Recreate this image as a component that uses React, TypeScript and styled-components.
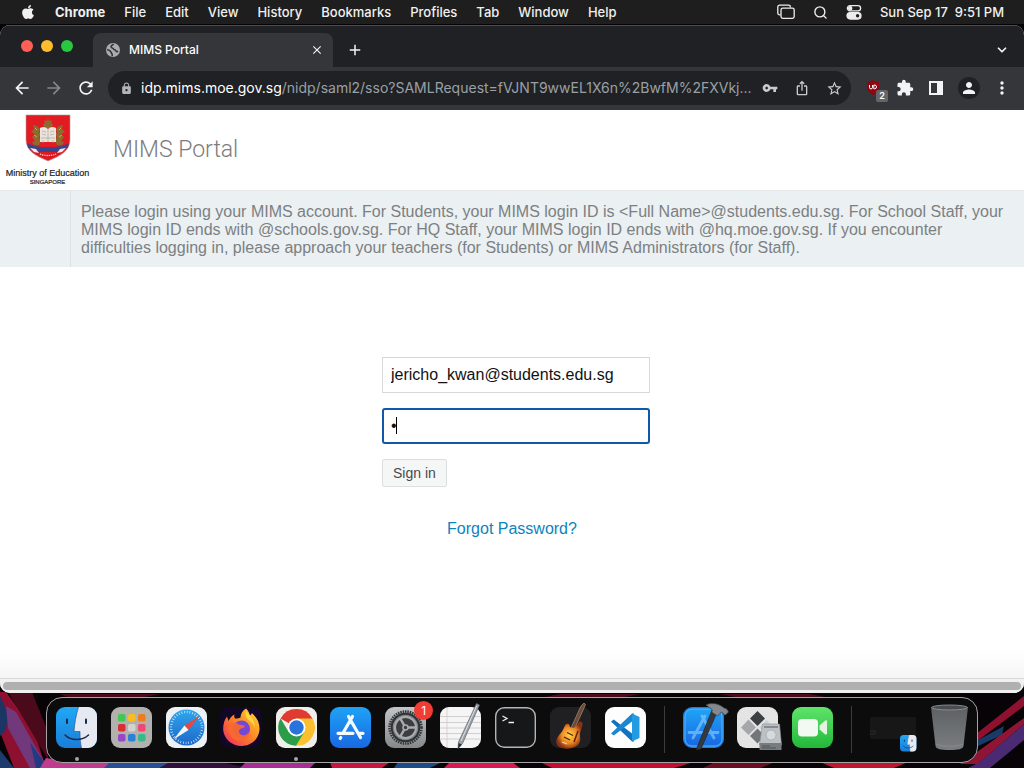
import React from "react";
import styled, { createGlobalStyle } from "styled-components";
import { FaApple } from "react-icons/fa";
import {
  MdArrowBack,
  MdArrowForward,
  MdRefresh,
  MdLock,
  MdVpnKey,
  MdIosShare,
  MdStarBorder,
  MdExtension,
  MdPerson,
  MdMoreVert,
  MdPublic,
  MdClose,
  MdAdd,
} from "react-icons/md";
import { ChevronDown, Search } from "lucide-react";

const GlobalStyle = createGlobalStyle`
  *, *::before, *::after { box-sizing: border-box; }
  html, body { margin: 0; padding: 0; background: #000; }
  body { font-family: Inter, "Liberation Sans", sans-serif; }
  button, input { font: inherit; }
  svg { display: block; flex: none; }
`;

const Desktop = styled.div`
  position: relative;
  display: flex;
  flex-direction: column;
  min-height: 100vh;
  background: #050305;
  overflow: hidden;
`;

const Wallpaper = styled.svg`
  position: absolute;
  left: 0;
  bottom: 0;
  width: 100%;
  height: 96px;
`;

/* ---------- system menu bar ---------- */

const MenuBar = styled.header`
  position: relative;
  display: flex;
  align-items: center;
  justify-content: space-between;
  height: 24px;
  padding: 0 20px;
  background: #1e1e1e;
  color: #f0f0f0;
  font-size: 13px;
  font-weight: 500;
  line-height: 16px;
`;

const MenuList = styled.nav`
  display: flex;
  align-items: center;
  gap: 19px;
`;

const MenuItem = styled.button<{ $bold?: boolean }>`
  padding: 0;
  border: 0;
  background: none;
  color: inherit;
  font-weight: ${(p) => (p.$bold ? 700 : 500)};
  white-space: nowrap;
`;

const StatusList = styled.div`
  display: flex;
  align-items: center;
  gap: 18px;
`;

const Clock = styled.time`
  white-space: pre;
`;

/* ---------- browser window ---------- */

const BrowserWindow = styled.main`
  position: relative;
  display: flex;
  flex-direction: column;
  flex: 1;
  margin-top: 1px;
  border-radius: 10px;
  background: #fff;
  overflow: hidden;
`;

const TabStrip = styled.div`
  display: flex;
  align-items: flex-end;
  height: 42px;
  background: #202124;
  border-top: 1px solid #4b4c4e;
  color: #fff;
`;

const Lights = styled.div`
  display: flex;
  gap: 8px;
  align-self: center;
  width: 93px;
  padding: 0 0 2px 21px;
`;

const Light = styled.button<{ $color: string }>`
  width: 12px;
  height: 12px;
  padding: 0;
  border: 0;
  border-radius: 50%;
  background: ${(p) => p.$color};
`;

const Tab = styled.div`
  display: flex;
  align-items: center;
  gap: 8px;
  width: 240px;
  height: 34px;
  padding: 0 9px 0 12px;
  border-radius: 8px 8px 0 0;
  background: #35363a;
`;

const TabTitle = styled.span`
  flex: 1;
  font-size: 12px;
  font-weight: 500;
  line-height: 16px;
`;

const IconButton = styled.button<{ $color?: string }>`
  display: flex;
  align-items: center;
  justify-content: center;
  padding: 0;
  border: 0;
  background: none;
  color: ${(p) => p.$color || "#f1f3f4"};
`;

const StripActions = styled.div`
  display: flex;
  flex: 1;
  align-items: center;
  justify-content: space-between;
  height: 34px;
  padding: 0 15px 0 13px;
`;

const Toolbar = styled.div`
  display: flex;
  align-items: center;
  height: 43px;
  padding: 0 12px 1px;
  background: #35363a;
`;

const NavButtons = styled.div`
  display: flex;
  gap: 12px;
  margin-right: 12px;
`;

const Omnibox = styled.div`
  display: flex;
  flex: 1;
  align-items: center;
  gap: 8px;
  min-width: 0;
  height: 34px;
  padding: 0 8px 0 12px;
  border-radius: 17px;
  background: #202124;
`;

const Url = styled.div`
  flex: 1;
  min-width: 0;
  overflow: hidden;
  white-space: nowrap;
  color: #9aa0a6;
  font-size: 14px;
  line-height: 20px;
`;

const UrlHost = styled.span`
  color: #fff;
`;

const OmniActions = styled.div`
  display: flex;
  gap: 16px;
`;

const Extensions = styled.div`
  display: flex;
  align-items: center;
  gap: 12px;
  margin-left: 13px;
`;

const ExtensionIcon = styled(IconButton)`
  position: relative;
  width: 20px;
  height: 20px;
`;

const ExtensionCount = styled.span`
  position: absolute;
  right: -4px;
  bottom: -4px;
  width: 12px;
  border-radius: 2px;
  background: #63666a;
  color: #fff;
  font-size: 9px;
  font-weight: 600;
  line-height: 12px;
  text-align: center;
`;

const Avatar = styled(IconButton)`
  width: 22px;
  height: 22px;
  border-radius: 50%;
  background: #202124;
`;

/* ---------- portal page ---------- */

const Portal = styled.div`
  display: flex;
  flex: 1;
  flex-direction: column;
  background: linear-gradient(to top, #f5f5f5, #ffffff 28px);
  font-family: "Liberation Sans", Arial, sans-serif;
`;

const PortalHeader = styled.div`
  display: flex;
  align-items: center;
  height: 80px;
  background: #fff;
`;

const Crest = styled.div`
  display: flex;
  flex-direction: column;
  align-items: center;
  width: 95px;
  color: #222;
`;

const Ministry = styled.span`
  margin-top: 6px;
  font-size: 9px;
  line-height: 11px;
  white-space: nowrap;
  -webkit-text-stroke: 0.2px #222;
`;

const Country = styled.span`
  font-size: 6px;
  line-height: 7px;
  -webkit-text-stroke: 0.2px #222;
`;

const PortalTitle = styled.h1`
  margin: 0 0 0 18px;
  color: #7c7c7c;
  font-family: Roboto, "Liberation Sans", sans-serif;
  font-size: 23px;
  font-weight: 300;
  line-height: 28px;
`;

const Notice = styled.section`
  display: grid;
  grid-template-columns: 70px 1fr;
  background: #ebf0f2;
  border-top: 1px solid #e4e8ea;
`;

const NoticeText = styled.p`
  grid-column: 2;
  margin: 0;
  padding: 12px 10px 10px;
  border-left: 1px solid #dce1e3;
  color: #7c8082;
  font-size: 16px;
  line-height: 18px;
`;

const LoginForm = styled.form`
  display: flex;
  flex-direction: column;
  align-items: flex-start;
  width: 268px;
  margin: 90px auto;
`;

const LoginArea = styled.div`
  padding-left: 8px;
`;

const Field = styled.div`
  position: relative;
  width: 100%;
  margin-bottom: 15px;
`;

const TextInput = styled.input<{ $active?: boolean }>`
  display: block;
  width: 100%;
  height: 36px;
  padding: 0 ${(p) => (p.$active ? 7 : 8)}px;
  border: ${(p) => (p.$active ? "2px solid #1158a8" : "1px solid #d6d9da")};
  border-radius: ${(p) => (p.$active ? 3 : 0)}px;
  background: #fff;
  color: #111;
  font-size: 16px;
  outline: none;
`;

const Caret = styled.span`
  position: absolute;
  top: 9px;
  left: 14px;
  width: 1px;
  height: 17px;
  background: #000;
`;

const SignIn = styled.button`
  height: 28px;
  padding: 0 10px;
  border: 1px solid #dcdfe0;
  border-radius: 2px;
  background: #f5f7f7;
  color: #444b4d;
  font-size: 14px;
  line-height: 18px;
`;

const Forgot = styled.a`
  align-self: center;
  margin: 33px 8px 0 0;
  color: #0b84be;
  font-size: 16px;
  line-height: 18px;
  text-decoration: none;
`;

const ScrollTrack = styled.div`
  height: 15px;
  padding: 3px;
  border-top: 1px solid #d9d9d9;
  background: #f0f0f0;
`;

const ScrollThumb = styled.div`
  height: 8px;
  border-radius: 4px;
  background: #b0b0b0;
`;

/* ---------- dock ---------- */

const Dock = styled.nav`
  position: relative;
  display: flex;
  align-items: center;
  justify-content: space-between;
  height: 66px;
  margin: 4px 46px 5px;
  padding: 0 9px 6px;
  border: 1px solid #a5a3a5;
  border-radius: 16px;
  background: #0d0c0d;
`;

const DockItem = styled.button`
  position: relative;
  display: flex;
  padding: 0;
  border: 0;
  background: none;
`;

const DockIcon = styled.svg`
  overflow: visible;
`;

const DockDivider = styled.span`
  width: 1px;
  height: 47px;
  margin: 4px 4px 0;
  background: #3d3c3d;
`;

const RunningDot = styled.span`
  position: absolute;
  bottom: -13px;
  left: 50%;
  width: 4px;
  height: 4px;
  margin-left: -2px;
  border-radius: 50%;
  background: #a5a5a5;
`;

const Badge = styled.span`
  position: absolute;
  top: -6px;
  right: -7px;
  width: 19px;
  border-radius: 50%;
  background: #f23b34;
  color: #fff;
  font-size: 12px;
  line-height: 19px;
  text-align: center;
`;

/* ---------- drawings ---------- */

const WindowsGlyph = () => (
  <svg width="18" height="16" viewBox="0 0 18 16" fill="none" stroke="#ededed" strokeWidth="1.3">
    <path d="M3.5 10.8H2.6A1.8 1.8 0 0 1 .8 9V3A1.8 1.8 0 0 1 2.6 1.2h9A1.8 1.8 0 0 1 13.4 3v.6" />
    <rect x="4" y="4.2" width="13.2" height="10.2" rx="1.8" />
  </svg>
);

const ControlGlyph = () => (
  <svg width="16" height="16" viewBox="0 0 16 16" fill="none" stroke="#ededed" strokeWidth="1.3">
    <rect x="1.4" y="1.6" width="13.2" height="5.2" rx="2.6" />
    <circle cx="4.2" cy="4.2" r="1.6" fill="#ededed" />
    <rect x="1" y="8.6" width="14" height="6.4" rx="3.2" fill="#ededed" />
    <circle cx="11.6" cy="11.8" r="1.7" fill="#1e1e1e" stroke="none" />
  </svg>
);

const PanelGlyph = () => (
  <svg width="20" height="20" viewBox="0 0 20 20">
    <path fill="#f1f3f4" fillRule="evenodd" d="M3 3h14v14H3zM5 5v10h6V5z" />
  </svg>
);

const GlobeGlyph = () => (
  <svg width="16" height="16" viewBox="0 0 16 16">
    <circle cx="8" cy="8" r="7" fill="#a8abaf" />
    <path d="M2.200 7.500C4 8 5.500 8.500 6 10c.2 1.200 1.200 1.500 1.200 2.800v1.400M8.500 2c-.8 1.200-2.500 1.200-2.500 2.600S8 6 8.500 7s2 .6 2.400 1.800c.3 1 1.500 1 2.300.4" fill="none" stroke="#35363a" strokeWidth="1.600" />
  </svg>
);

const ShieldGlyph = () => (
  <svg width="20" height="20" viewBox="0 0 20 20">
    <path d="M9 2c2 1.400 4 1.800 6 2v5c0 4-3 6.500-6 8-3-1.500-6-4-6-8V4c2-.2 4-.6 6-2z" fill="#8c0710" />
    <path d="M5.500 7v2.400a1.500 1.500 0 0 0 3 0V7M9.800 7v3.800h.8a1.900 1.900 0 0 0 0-3.800z" fill="none" stroke="#fff" />
  </svg>
);

const CrestDrawing = () => (
  <svg width="46" height="48" viewBox="0 0 46 48">
    <path d="M1 1h44v25c0 11-10 16-22 21C11 42 1 37 1 26z" fill="#e21b23" stroke="#b99a9a" strokeWidth=".6" />
    <g fill="#8d6a2f">
      <path d="M20 8l-1-2 3 1 1-3 1 3 3-1-1 2 2 3-2 3h-6l-2-3z" />
      <path d="M8 11l4 1 3 3-1 3 2 3-2 2 2 4-2 4H9l-2-3 3-1-3-4 3-3-4-2 3-3z" />
      <path d="M38 11l-4 1-3 3 1 3-2 3 2 2-2 4 2 4h5l2-3-3-1 3-4-3-3 4-2-3-3z" />
    </g>
    <path d="M10 14l2 2M36 14l-2 2M9 21l3 2M37 21l-3 2" stroke="#d9a441" strokeWidth="1" />
    <path d="M15 14c3-2 6-1 8 1 2-2 5-3 8-1v14H15z" fill="#e9e4dc" />
    <path d="M23 15v13M17 17l4 1M17 20l4 1M29 17l-4 1M29 20l-4 1M16 24h14M18 26v3M28 26v3" stroke="#b0a39c" strokeWidth=".7" />
    <path d="M2 29c7 4 12 4 21 4s14 0 21-4l-1 4c-5 5-11 5-20 5S8 38 3 33z" fill="#34478c" />
    <path d="M5 34l6 1 3 4-5-1zM41 34l-6 1-3 4 5-1z" fill="#f4e8ee" />
    <path d="M14 38c5 2 13 2 18 0l-2 4c-4 2-10 2-14 0z" fill="#d8141d" />
    <path d="M15 40c5 2 11 2 16 0" fill="none" stroke="#f7b7b5" strokeWidth="1.4" strokeDasharray="1.400 .8" />
  </svg>
);

const FinderArt = () => (
  <>
    <rect width="41" height="41" rx="9" fill="url(#finderBlue)" />
    <path d="M22.500 0H32a9 9 0 0 1 9 9v23a9 9 0 0 1-9 9h-6.500c-1.200-5-1.500-9-1.500-16.500h-6C18.500 17 20 8 22.500 0z" fill="#e6e9f2" />
    <path d="M22.500 0C20 8 18.500 17 18 24.500h6c0 6.500.5 11.500 1.500 16.500" fill="none" stroke="#1d4e86" strokeWidth=".6" />
    <path d="M11 12.500v3.500M30 12.500v3.500" stroke="#1b2b45" strokeWidth="2" strokeLinecap="round" />
    <path d="M9 28c6 6 17 6 23.500 0" fill="none" stroke="#1b2b45" strokeWidth="1.500" strokeLinecap="round" />
  </>
);

const launchColors = ["#3fc950", "#f7bd24", "#ee7d20", "#d92e35", "#d2d3ce", "#ee4971", "#9748c7", "#2b80d8", "#37ba88"];

const LaunchpadArt = () => (
  <>
    <rect width="41" height="41" rx="9" fill="#b3b1ad" />
    {launchColors.map((color, i) => (
      <rect key={color} x={7 + (i % 3) * 10} y={7 + Math.floor(i / 3) * 10} width="7.500" height="7.500" rx="1.800" fill={color} />
    ))}
  </>
);

const SafariArt = () => (
  <>
    <rect width="41" height="41" rx="9" fill="#edf0f4" />
    <circle cx="20.500" cy="20.500" r="18" fill="url(#safariBlue)" />
    <circle cx="20.500" cy="20.500" r="15.500" fill="none" stroke="#d9efff" strokeWidth="2.400" strokeDasharray=".7 2" />
    <path d="M33.500 9L22.500 23l-4-4.500z" fill="#e8473f" />
    <path d="M7.500 32.500l11-14 4 4.500z" fill="#f4f6f8" />
  </>
);

const FirefoxArt = () => (
  <>
    <rect x="-1" width="42" height="41" rx="9" fill="#120726" />
    <path d="M25 1.500c2 2 3.500 4.500 4 7 1.500-1 1.800-2 1.800-2.500C35.500 10 39 16 38.500 23 37.500 32.500 30 39 20.500 39S3 32 2.200 23C2 18 3 13 6 9.500L7.500 14c1.500-3 3-5 6-6.500-.5 2-.2 3 .5 4 2 .2 4 0 5.500-1 0-3.500 2-7 5.500-9z" fill="url(#firefoxHeat)" />
    <circle cx="20.500" cy="22" r="8.500" fill="#7447d8" />
    <path d="M7 17c3-2 7-2 10 0 2 1.500 5 .5 7 2-1 2-3 2-5 3-2 2-1 5 2 6 3 1 6-1 8-4 0 6-4 10-9 10C11 34 6 27 7 17z" fill="#f9692c" opacity=".92" />
    <path d="M25 4c3 4 9 8 9 17-2-6-6-7-8-10-1.500-2-1.500-5-1-7z" fill="#ffd83c" />
  </>
);

const ChromeArt = () => (
  <>
    <rect width="41" height="41" rx="9" fill="#f0eeec" />
    <path d="M20.500 20.500L4.500 11.500A18.300 18.300 0 0 1 36.500 11.500z" fill="#e03b30" />
    <path d="M20.500 20.500V11.500H36.500A18.300 18.300 0 0 1 20 38.800z" fill="#fbc02f" />
    <path d="M20.500 20.500L28.300 25 20 38.800A18.300 18.300 0 0 1 4.600 11.500L12.700 25z" fill="#2c9c4b" />
    <circle cx="20.500" cy="20.500" r="9" fill="#fff" />
    <circle cx="20.500" cy="20.500" r="7.200" fill="#2874dc" />
  </>
);

const AppStoreArt = () => (
  <>
    <rect width="41" height="41" rx="9" fill="url(#storeBlue)" />
    <g stroke="#f5faff" strokeWidth="3.200" strokeLinecap="round" fill="none">
      <path d="M22.500 9.500L13 26M18.500 9.500L30.500 30.500M8 26.300h15M28.500 26.300H33M10.800 30.500l-.6 1" />
    </g>
  </>
);

const SettingsArt = () => (
  <>
    <rect width="41" height="41" rx="9" fill="url(#metal)" />
    <circle cx="20.500" cy="20.500" r="16" fill="#a2a4a5" stroke="#333638" strokeWidth="2.500" strokeDasharray="1.500 .9" />
    <circle cx="20.500" cy="20.500" r="13.800" fill="#828587" stroke="#2f3234" strokeWidth="2" />
    <circle cx="20.500" cy="20.500" r="10.500" fill="#3b3e40" stroke="#a9abac" strokeWidth="2" />
    <path d="M20.500 20.500L31 20.500M20.500 20.500L15.200 11.400M20.500 20.500L15.200 29.600" stroke="#a9abac" strokeWidth="2.400" />
    <circle cx="20.500" cy="20.500" r="2.500" fill="#3b3e40" stroke="#a9abac" strokeWidth="1.600" />
  </>
);

const TextEditArt = () => (
  <>
    <rect width="41" height="41" rx="9" fill="#f5f5f5" />
    <path d="M0 9.500h41M0 15.500h41M0 21h41M0 26.500h41M0 32h41" stroke="#c6c6c6" strokeWidth=".8" />
    <path d="M7 0v41" stroke="#d5b8b4" strokeWidth=".6" />
    <path d="M36.500-3.500l3 1.500L22.500 36.500l-4.500 5 .5-6.500z" fill="#9ca1a8" stroke="#5f646b" strokeWidth=".7" />
    <path d="M36.500-1L21 34" stroke="#dde1e6" strokeWidth="1" />
    <path d="M18.500 36l3.500 1.500-4 4.500z" fill="#323538" />
  </>
);

const TerminalArt = () => (
  <>
    <rect x=".7" y=".7" width="39.600" height="39.600" rx="8.500" fill="#161718" stroke="#b4b5b6" strokeWidth="1.400" />
    <path d="M7.500 9l4.500 2.500L7.500 14M13.500 15.500h5.500" fill="none" stroke="#f0f0f0" strokeWidth="1.300" />
  </>
);

const GuitarArt = () => (
  <>
    <rect width="41" height="41" rx="9" fill="#202023" />
    <path d="M20.500 22L31-1l3-3 1.500 1.500L34 1 23.500 24z" fill="#6c4a37" stroke="#baa08c" strokeWidth=".6" />
    <path d="M15.500 17.500c1.500-1.500 4-1 4 1 0 2 2 2.500 5 2l4-5c2-2 4-1 4 1.500 0 3-2 6-2.500 9.500-.3 4 1.500 8-2 11.500-4 4-15 5-19.500 1.500-4-3.500-2-9 1.500-12.500 3-3 3.500-6 5.500-9.500z" fill="url(#sunburst)" />
    <path d="M14 30l6 3M17 25.500l6 3" stroke="#4a2312" strokeWidth="1.300" />
    <path d="M12 35l5 2" stroke="#f2d9a1" strokeWidth="1.300" />
    <path d="M28 24l-4 11" stroke="#5d1f10" strokeWidth="1.500" />
  </>
);

const CodeArt = () => (
  <>
    <rect width="41" height="41" rx="9" fill="#fdfdfd" />
    <path d="M6 14.500l2.800-2L29 28v6.500h-2z" fill="#1173c0" />
    <path d="M6 26.500l2.800 2L29 13V6.500h-2z" fill="#1d86d1" />
    <path d="M27 6.500L34.500 10v21L27 34.500z" fill="#229be3" />
  </>
);

const XcodeArt = () => (
  <>
    <rect width="41" height="41" rx="9" fill="#1a7fe0" />
    <rect x="2" y="2" width="37" height="37" rx="7" fill="url(#storeBlue)" stroke="#6fc1fb" strokeWidth=".8" />
    <g stroke="#8fd2ff" strokeWidth="2.800" fill="none" strokeLinecap="round" opacity=".6">
      <path d="M22 9L10 31M19 9l12 22M6 25.500h29" />
    </g>
    <path d="M29 3l5 2.500L18 42l-5 1z" fill="#35393f" stroke="#1d2024" strokeWidth=".6" />
    <path d="M23-2c6-3 14-1 18 3 2 0 4 2 4.500 4l-3 3c-2 0-2-2-4-3l-4 4-6-4 1-2c-2-2-4-3-6.500-5z" fill="#85898e" stroke="#3a3d41" strokeWidth=".7" />
  </>
);

const AssistantArt = () => (
  <>
    <rect width="41" height="41" rx="9" fill="#e4e4e5" />
    <path d="M20.500 4l7.500 7.500-7.500 7.500-7.500-7.500z" fill="#3c4043" />
    <path d="M11.500 12.500l7.500 8-7.500 7.500L4 20.500z" fill="#a5a7aa" />
    <path d="M29.500 13l7.500 7.500-7.500 7.500-7.500-7.500z" fill="#d0d1d2" />
    <path d="M20.500 21.500l7.500 7.500-7.500 7.500L13 29z" fill="#737679" />
    <path d="M25.500 17h17l2 21H22.500z" fill="#bcc1c5" stroke="#8b8f92" strokeWidth=".6" />
    <path d="M22.500 36h22v7h-22z" fill="#777c80" />
    <path d="M27 20h14M25 39h8M25 41h14" stroke="#4f565a" strokeWidth="1.200" />
    <circle cx="34" cy="28" r="5" fill="#d6dadd" stroke="#9da3a6" strokeWidth=".7" />
  </>
);

const FaceTimeArt = () => (
  <>
    <rect width="41" height="41" rx="9" fill="url(#callGreen)" />
    <rect x="6" y="12" width="20" height="17.500" rx="4" fill="#f2f8f2" />
    <path d="M27.500 18.500l5.500-4.800c1-.8 2-.3 2 1v11.600c0 1.300-1 1.800-2 1l-5.500-4.800z" fill="#e3f2e3" />
  </>
);

const MinimizedArt = () => (
  <>
    <rect x="0" y="10" width="46" height="22" rx="2" fill="#181718" />
    <path d="M0 24h5v3H0" fill="none" stroke="#2c2b2c" />
    <g transform="translate(30 28) scale(.4)">
      <FinderArt />
    </g>
  </>
);

const TrashArt = () => (
  <>
    <path d="M0 0h37l-4.500 39c-.5 3-5 4-14 4s-13.500-1-14-4z" fill="url(#bin)" />
    <ellipse cx="18.500" cy=".5" rx="18" ry="2.500" fill="#4b4e50" stroke="#8f9294" strokeWidth=".9" />
    <path d="M5 37c5 3 22 3 27 0" fill="none" stroke="#8e9193" strokeWidth=".7" />
  </>
);

const DockDefs = () => (
  <svg width="0" height="0" aria-hidden="true">
    <defs>
      <linearGradient id="finderBlue" x2="0" y2="1"><stop stopColor="#22a8f5" /><stop offset="1" stopColor="#187ed9" /></linearGradient>
      <linearGradient id="safariBlue" x2="0" y2="1"><stop stopColor="#2fa7ec" /><stop offset="1" stopColor="#1d68c8" /></linearGradient>
      <linearGradient id="storeBlue" x2="0" y2="1"><stop stopColor="#1fa3f6" /><stop offset="1" stopColor="#1968e3" /></linearGradient>
      <linearGradient id="firefoxHeat" x1="1" y1="0" x2="0" y2="1"><stop stopColor="#ffdf3c" /><stop offset=".45" stopColor="#fd8a26" /><stop offset="1" stopColor="#f0265e" /></linearGradient>
      <linearGradient id="metal" x2="0" y2="1"><stop stopColor="#c3c6c8" /><stop offset="1" stopColor="#85888a" /></linearGradient>
      <linearGradient id="callGreen" x2="0" y2="1"><stop stopColor="#5fe46a" /><stop offset="1" stopColor="#22b83a" /></linearGradient>
      <linearGradient id="bin" x2="0" y2="1"><stop stopColor="#5d6163" /><stop offset="1" stopColor="#7b7e80" /></linearGradient>
      <radialGradient id="sunburst"><stop stopColor="#ffd34d" /><stop offset=".6" stopColor="#ee8724" /><stop offset="1" stopColor="#8b3314" /></radialGradient>
    </defs>
  </svg>
);

const WallpaperArt = () => (
  <Wallpaper viewBox="0 0 1024 96" preserveAspectRatio="none" aria-hidden="true">
    <rect width="1024" height="96" fill="#070306" />
    <path d="M0 20h6l28 38 12 38H14L0 60z" fill="#8e1030" />
    <path d="M8 20h24l16 40v28z" fill="#4a0a1c" />
    <path d="M0 24l8 18-2 16-6 6z" fill="#1b3564" />
    <path d="M6 34l10 6 18 32 14 24H30L8 56z" fill="#72387c" />
    <path d="M30 70l18 26H36z" fill="#243a80" />
    <path d="M0 78l14 18H0z" fill="#1d3b6c" />
    <path d="M40 96l6-10 24 4h40l-4 6z" fill="#c03c8f" />
    <path d="M110 90h60l-10 6h-56z" fill="#284e96" />
    <path d="M170 90h50l30 6h-90z" fill="#31103b" />
    <path d="M246 90h70l-6 6h-70z" fill="#a72e95" />
    <path d="M330 90h60l-8 6h-50z" fill="#c71641" />
    <path d="M398 90h44l-12 6h-36z" fill="#1b4c86" />
    <path d="M450 90h62l8 6h-76z" fill="#d71a51" />
    <path d="M540 90h154l-20 6H552z" fill="#c10f32" />
    <path d="M715 90h60l-14 6h-58z" fill="#6b0e24" />
    <path d="M820 90h88l-14 6h-60z" fill="#bd1730" />
    <path d="M976 62l48-38v10l-48 36z" fill="#8e1230" />
    <path d="M978 68l26-14-2 9-26 12z" fill="#173a68" />
    <path d="M966 88l58-42v6l-46 40h-18z" fill="#8f1534" />
    <path d="M980 90l44-38v16l-34 28h-22z" fill="#4b2a74" />
    <path d="M60 22h100l-20 4H70zM560 22h80l-20 4h-80zM720 22h90l20 4h-90z" fill="#4c0b1c" />
  </Wallpaper>
);

/* ---------- page ---------- */

const menus = ["File", "Edit", "View", "History", "Bookmarks", "Profiles", "Tab", "Window", "Help"];

type DockEntry = { name: string; art?: React.FC; width?: number; running?: boolean; badge?: string };

const dockEntries: DockEntry[] = [
  { name: "Finder", art: FinderArt, running: true },
  { name: "Launchpad", art: LaunchpadArt },
  { name: "Safari", art: SafariArt },
  { name: "Firefox", art: FirefoxArt },
  { name: "Chrome", art: ChromeArt, running: true },
  { name: "App Store", art: AppStoreArt },
  { name: "System Settings", art: SettingsArt, badge: "1" },
  { name: "TextEdit", art: TextEditArt },
  { name: "Terminal", art: TerminalArt },
  { name: "GarageBand", art: GuitarArt },
  { name: "Code", art: CodeArt },
  { name: "divider-apps" },
  { name: "Xcode", art: XcodeArt },
  { name: "Boot Camp Assistant", art: AssistantArt },
  { name: "FaceTime", art: FaceTimeArt },
  { name: "divider-files" },
  { name: "Minimized window", art: MinimizedArt, width: 47 },
  { name: "Trash", art: TrashArt, width: 37 },
];

export default function App() {
  return (
    <Desktop>
      <GlobalStyle />
      <WallpaperArt />
      <MenuBar>
        <MenuList aria-label="Menu bar">
          <MenuItem aria-label="Apple menu"><FaApple size={16} /></MenuItem>
          <MenuItem $bold>Chrome</MenuItem>
          {menus.map((menu) => (
            <MenuItem key={menu}>{menu}</MenuItem>
          ))}
        </MenuList>
        <StatusList>
          <WindowsGlyph />
          <Search size={15} strokeWidth={2.2} />
          <ControlGlyph />
          <Clock>{"Sun Sep 17  9:51 PM"}</Clock>
        </StatusList>
      </MenuBar>

      <BrowserWindow>
        <TabStrip>
          <Lights>
            <Light $color="#ff5f57" aria-label="Close window" />
            <Light $color="#febc2e" aria-label="Minimize window" />
            <Light $color="#28c840" aria-label="Zoom window" />
          </Lights>
          <Tab>
            <GlobeGlyph />
            <TabTitle>MIMS Portal</TabTitle>
            <IconButton aria-label="Close tab"><MdClose size={14} /></IconButton>
          </Tab>
          <StripActions>
            <IconButton aria-label="New tab"><MdAdd size={18} /></IconButton>
            <IconButton aria-label="Search tabs"><ChevronDown size={14} strokeWidth={3} /></IconButton>
          </StripActions>
        </TabStrip>

        <Toolbar>
          <NavButtons>
            <IconButton aria-label="Back"><MdArrowBack size={20} /></IconButton>
            <IconButton aria-label="Forward" $color="#85878a"><MdArrowForward size={20} /></IconButton>
            <IconButton aria-label="Reload"><MdRefresh size={20} /></IconButton>
          </NavButtons>
          <Omnibox>
            <MdLock size={13} color="#b0b3b7" />
            <Url role="textbox" aria-label="Address" tabIndex={0}>
              <UrlHost>idp.mims.moe.gov.sg</UrlHost>
              /nidp/saml2/sso?SAMLRequest=fVJNT9wwEL1X6n%2BwfM%2FXVkj...
            </Url>
            <OmniActions>
              <IconButton aria-label="Passwords" $color="#c8cacd"><MdVpnKey size={16} /></IconButton>
              <IconButton aria-label="Share" $color="#c8cacd"><MdIosShare size={16} /></IconButton>
              <IconButton aria-label="Bookmark" $color="#c8cacd"><MdStarBorder size={17} /></IconButton>
            </OmniActions>
          </Omnibox>
          <Extensions>
            <ExtensionIcon aria-label="Content blocker">
              <ShieldGlyph />
              <ExtensionCount>2</ExtensionCount>
            </ExtensionIcon>
            <IconButton aria-label="Extensions"><MdExtension size={18} /></IconButton>
            <IconButton aria-label="Side panel"><PanelGlyph /></IconButton>
            <Avatar aria-label="Profile"><MdPerson size={18} /></Avatar>
            <IconButton aria-label="More"><MdMoreVert size={20} /></IconButton>
          </Extensions>
        </Toolbar>

        <Portal>
          <PortalHeader>
            <Crest>
              <CrestDrawing />
              <Ministry>Ministry of Education</Ministry>
              <Country>SINGAPORE</Country>
            </Crest>
            <PortalTitle>MIMS Portal</PortalTitle>
          </PortalHeader>
          <Notice>
            <NoticeText>
              Please login using your MIMS account. For Students, your MIMS login ID is &lt;Full
              Name&gt;@students.edu.sg. For School Staff, your MIMS login ID ends with @schools.gov.sg. For HQ
              Staff, your MIMS login ID ends with @hq.moe.gov.sg. If you encounter difficulties logging in,
              please approach your teachers (for Students) or MIMS Administrators (for Staff).
            </NoticeText>
          </Notice>
          <LoginArea>
            <LoginForm onSubmit={(event) => event.preventDefault()}>
              <Field>
                <TextInput aria-label="Username" defaultValue="jericho_kwan@students.edu.sg" />
              </Field>
              <Field>
                <TextInput $active type="password" aria-label="Password" defaultValue="j" />
                <Caret />
              </Field>
              <SignIn type="submit">Sign in</SignIn>
              <Forgot href="#forgot">Forgot Password?</Forgot>
            </LoginForm>
          </LoginArea>
        </Portal>
        <ScrollTrack>
          <ScrollThumb />
        </ScrollTrack>
      </BrowserWindow>

      <DockDefs />
      <Dock aria-label="Dock">
        {dockEntries.map(({ name, art: Art, width = 41, running, badge }) =>
          Art ? (
            <DockItem key={name} aria-label={name}>
              <DockIcon width={width} height="41" viewBox={`0 0 ${width} 41`}>
                <Art />
              </DockIcon>
              {running && <RunningDot />}
              {badge && <Badge>{badge}</Badge>}
            </DockItem>
          ) : (
            <DockDivider key={name} />
          )
        )}
      </Dock>
    </Desktop>
  );
}
